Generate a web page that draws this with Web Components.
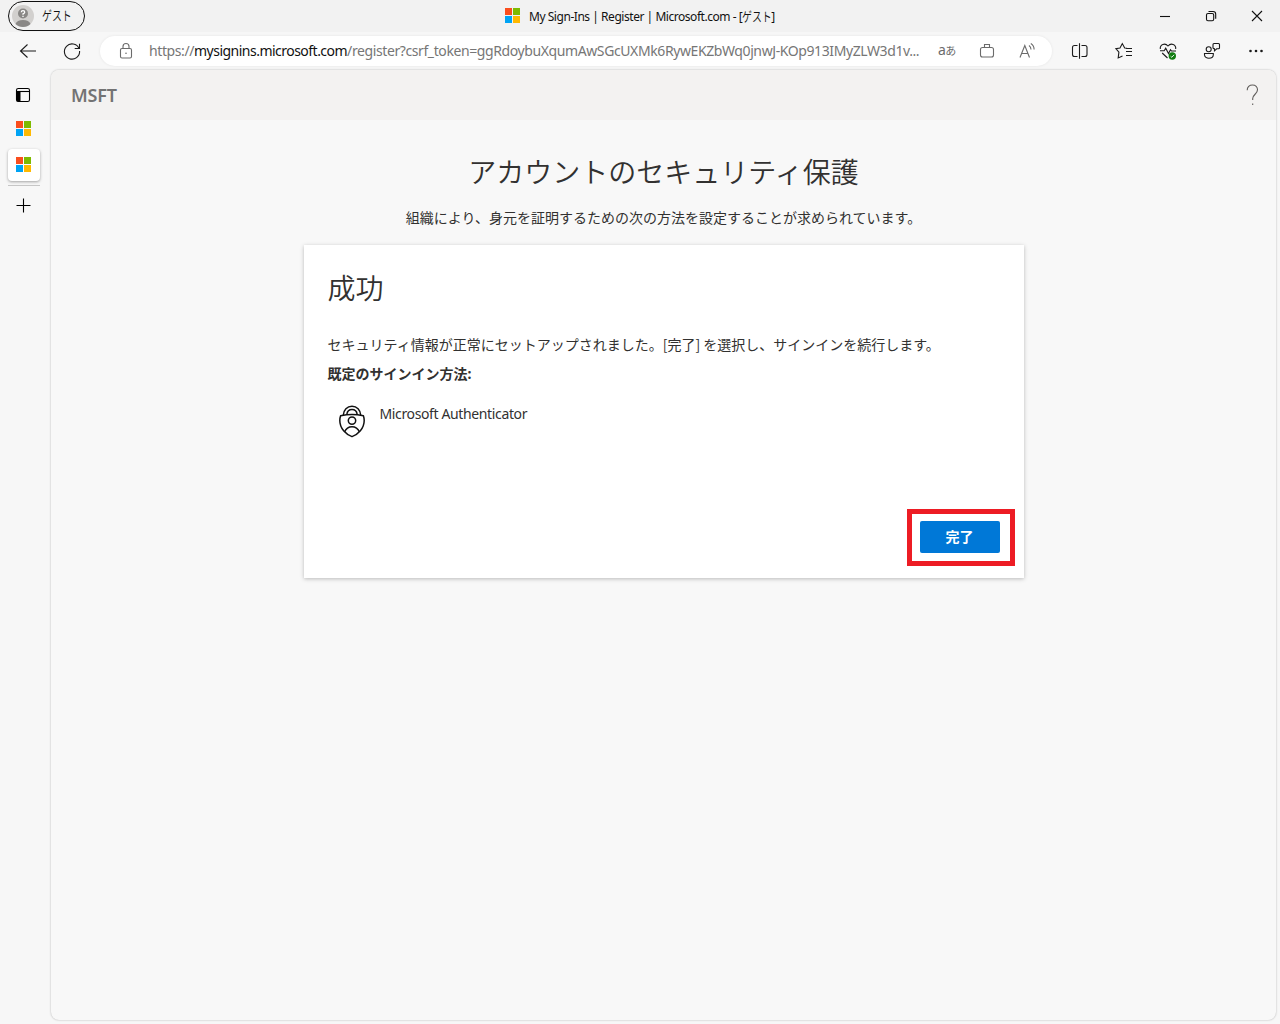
<!DOCTYPE html>
<html lang="ja">
<head>
<meta charset="UTF-8">
<title>My Sign-Ins | Register | Microsoft.com</title>
<style>
    body{
        margin: 0px;
        height: 100vh;
        overflow: hidden;
        background-color: #f7f7f7;
        font-family: "Noto Sans", "Noto Sans CJK JP", sans-serif;
        color: #323130;
    }
</style>
</head>
<body>
<browser-window>
    <title-bar slot="title">My Sign-Ins | Register | Microsoft.com</title-bar>
    <tool-bar slot="tools"></tool-bar>
    <side-tabs slot="tabs"></side-tabs>
    <page-header>MSFT</page-header>
    <page-intro>
        <span slot="title">アカウントのセキュリティ保護</span>
        組織により、身元を証明するための次の方法を設定することが求められています。
    </page-intro>
    <success-card>
        <span slot="title">成功</span>
        <span slot="message">セキュリティ情報が正常にセットアップされました。[完了] を選択し、サインインを続行します。</span>
        <span slot="label">既定のサインイン方法:</span>
        <auth-method>Microsoft Authenticator</auth-method>
        <done-button slot="action">完了</done-button>
    </success-card>
</browser-window>
<script>
const icons = {
    back: `<path d="M18 10H2.5M9.5 3.5L2.5 10L9.5 16.5"/>`,
    reload: `<path d="M17 7.5A7.6 7.6 0 1 0 17.6 10M17.5 2.7V7.5H12.7"/>`,
    lock: `<rect x="4.5" y="7.5" width="11" height="9.5" rx="1.5"/><path d="M7 7.5V5.5a3 3 0 0 1 6 0v2"/><circle cx="10" cy="12.2" r=".8" fill="currentColor" stroke="none"/>`,
    bag: `<rect x="3.5" y="6.5" width="13" height="9.5" rx="2"/><path d="M7.5 6.5v-3h5v3"/>`,
    read: `<path d="M3 16.5L7.8 4.5L12.5 16.5M4.7 12.5H11M12 4.5q2 1.4 2 4M13.8 2.5q3.3 2 3.3 6"/>`,
    split: `<path d="M7.5 4.5H4.5a2 2 0 0 0-2 2v7a2 2 0 0 0 2 2H7.5M11.5 4.5h3.5a2 2 0 0 1 2 2v7a2 2 0 0 1-2 2H11.5M9.5 2.3v15.4"/>`,
    star: `<path d="M13 7.3L10.7 7L8.3 2.6L6 7L1.9 7.6L4.9 11.1L4.2 16.9L8.5 14.9M12 7.5h6M12 10.5h6M12 14.5h6"/>`,
    health: `<path d="M2.3 8C1.8 3.5 7 1.5 10 5C13 1.5 18.2 3.5 17.7 8M2 9.7h4.2l1.5-2.5l2.8 5.3l2-3.8l1 1.3H18M4.2 12l5.3 5"/><circle cx="14.3" cy="15" r="3.7" fill="#107c10" stroke="none"/><path stroke="#fff" stroke-width=".9" d="M12.6 15.2l1.2 1.1l2.3-2.5"/>`,
    people: `<circle cx="6.7" cy="8.3" r="2.5"/><path d="M2.5 12.5h8.8v1.2c0 4.7-8.8 4.7-8.8 0zM11 3.5q0-1 1-1h4.5q1 0 1 1v3.3q0 1-1 1h-1.8l-2.2 2v-2q-1.5 0-1.5-1z"/>`,
    more: `<g fill="currentColor" stroke="none"><circle cx="4.5" cy="10" r="1.3"/><circle cx="10" cy="10" r="1.3"/><circle cx="15.5" cy="10" r="1.3"/></g>`,
    minimize: `<path d="M5 10.5h10"/>`,
    restore: `<rect x="5.5" y="7.5" width="7.2" height="7.2" rx="1.5"/><path d="M7.5 5.5h4.5q2.7 0 2.7 2.7v4.5"/>`,
    close: `<path d="M5 5L15 15M15 5L5 15"/>`,
    tabs: `<rect x="3.5" y="3.5" width="13" height="13" rx="1.8"/><path d="M3.5 6.5h13"/><path fill="currentColor" stroke="none" d="M3.5 6.5h4v10H5q-1.5 0-1.5-1.5z"/>`,
    plus: `<path d="M10.5 3.5v14M3.5 10.5h14"/>`,
    logo: `<g stroke="none"><path fill="#fa4e1e" d="M2 2h7v7H2z"/><path fill="#7eba00" d="M10 2h7v7h-7z"/><path fill="#00a3f4" d="M2 10h7v7H2z"/><path fill="#ffb901" d="M10 10h7v7h-7z"/></g>`
}

class UiIcon extends HTMLElement{
    constructor(){
        super();
        this._shadowRoot = this.attachShadow({mode: "open"})
    }
    connectedCallback(){
        this._shadowRoot.innerHTML = /*html*/`
            <style>
                :host{
                    display: block;
                    flex: none;
                    width: 20px;
                    height: 20px;
                }
                svg{
                    display: block;
                }
            </style>
            <svg width="20" height="20" viewBox="0 0 20 20" fill="none" stroke="currentColor" stroke-width="1.1">${icons[this.getAttribute("name")]}</svg>
        `
    }
}
customElements.define("ui-icon", UiIcon)

class BrowserWindow extends HTMLElement{
    constructor(){
        super();
        this.attachShadow({mode: "open"}).innerHTML = /*html*/`
            <style>
                :host{
                    display: grid;
                    height: 100vh;
                    grid-template-columns: 51px 1fr;
                    grid-template-rows: 32px 38px 1fr;
                }
                slot[name="title"], slot[name="tools"]{
                    display: block;
                    grid-column: 1 / 3;
                }
                .page{
                    margin: 0px 4px 4px 0px;
                    border-radius: 8px;
                    overflow: hidden;
                    background-color: #f8f8f8;
                    box-shadow: 0px 0px 2px rgba(0, 0, 0, 0.3);
                }
            </style>
            <slot name="title"></slot>
            <slot name="tools"></slot>
            <slot name="tabs"></slot>
            <div class="page"><slot></slot></div>
        `
    }
}
customElements.define("browser-window", BrowserWindow)

class TitleBar extends HTMLElement{
    constructor(){
        super();
        this.attachShadow({mode: "open"}).innerHTML = /*html*/`
            <style>
                :host{
                    display: grid;
                    grid-template-columns: 1fr auto 1fr;
                    height: 32px;
                    background-color: #f2f2f2;
                    color: #111;
                    font-size: 12px;
                }
                .profile{
                    box-sizing: border-box;
                    display: flex;
                    align-items: center;
                    width: 77px;
                    height: 30px;
                    margin: 1px 0px 0px 8px;
                    padding-left: 3px;
                    border: 1px solid #111;
                    border-radius: 15px;
                }
                .profile .kana{
                    margin: -3px 0px 0px 8px;
                }
                .kana{
                    display: inline-block;
                    width: 29px;
                    margin-top: -2px;
                    font-family: "Noto Sans CJK JP", sans-serif;
                    font-size: 13px;
                    font-weight: 350;
                    letter-spacing: 0px;
                    transform: scaleX(0.76);
                    transform-origin: left;
                    white-space: nowrap;
                }
                .title{
                    display: flex;
                    align-items: center;
                    gap: 6px;
                    height: 32px;
                    white-space: nowrap;
                }
                .text{
                    display: flex;
                    align-items: center;
                    width: 248px;
                    letter-spacing: -0.46px;
                    white-space: pre;
                }
                .controls{
                    display: flex;
                    justify-content: flex-end;
                    align-items: center;
                    gap: 26px;
                    padding-right: 13px;
                }
            </style>
            <div class="profile">
                <svg width="22" height="22" viewBox="0 0 22 22">
                    <circle cx="11" cy="11" r="11" fill="#d2d0ce"/>
                    <path d="M3.5 19q1.5-4 7.5-4t7.5 4q-3 3-7.5 3t-7.5-3z" fill="#8a8886"/>
                    <circle cx="11" cy="8.5" r="5" fill="#8a8886"/>
                    <path d="M9.3 7.3q0-1.6 1.7-1.6t1.7 1.5q0 1-1.7 1.7v.8M11 10.7v1.2" fill="none" stroke="#fff" stroke-width="1.3"/>
                </svg>
                <span class="kana">ゲスト</span>
            </div>
            <div class="title">
                <ui-icon name="logo"></ui-icon>
                <div class="text"><slot></slot> - [<span class="kana">ゲスト</span>]</div>
            </div>
            <div class="controls">
                <ui-icon name="minimize"></ui-icon>
                <ui-icon name="restore"></ui-icon>
                <ui-icon name="close"></ui-icon>
            </div>
        `
    }
}
customElements.define("title-bar", TitleBar)

class ToolBar extends HTMLElement{
    constructor(){
        super();
        this.attachShadow({mode: "open"}).innerHTML = /*html*/`
            <style>
                :host{
                    display: flex;
                    align-items: center;
                    height: 38px;
                    padding-left: 18px;
                    color: #1b1b1b;
                }
                .reload{
                    margin: 0px 18px 0px 24px;
                }
                .address{
                    box-sizing: border-box;
                    display: flex;
                    align-items: center;
                    width: 952px;
                    height: 30px;
                    padding-left: 16px;
                    border-radius: 15px;
                    background-color: #fff;
                    box-shadow: 0px 0px 3px rgba(0, 0, 0, 0.08);
                    color: #6b6b6b;
                }
                .url{
                    flex: none;
                    width: 774px;
                    margin: -1px 15px 0px 13px;
                    font-size: 14px;
                    letter-spacing: -0.4px;
                    white-space: nowrap;
                    color: #767676;
                }
                b{
                    font-weight: 400;
                    letter-spacing: -0.52px;
                    color: #111;
                }
                .lang{
                    width: 18px;
                    margin: -3px 21px 0px 0px;
                    font-size: 14px;
                    white-space: nowrap;
                    letter-spacing: -0.5px;
                }
                .lang small{
                    font-size: 11px;
                }
                .read{
                    margin-left: 20px;
                }
                .actions{
                    display: flex;
                    gap: 24px;
                    margin-left: 18px;
                }
            </style>
            <ui-icon name="back"></ui-icon>
            <ui-icon class="reload" name="reload"></ui-icon>
            <div class="address">
                <ui-icon name="lock"></ui-icon>
                <div class="url">https://<b>mysignins.microsoft.com</b>/register?csrf_token=ggRdoybuXqumAwSGcUXMk6RywEKZbWq0jnwJ-KOp913IMyZLW3d1v...</div>
                <div class="lang">a<small>あ</small></div>
                <ui-icon name="bag"></ui-icon>
                <ui-icon class="read" name="read"></ui-icon>
            </div>
            <div class="actions">
                <ui-icon name="split"></ui-icon>
                <ui-icon name="star"></ui-icon>
                <ui-icon name="health"></ui-icon>
                <ui-icon name="people"></ui-icon>
                <ui-icon name="more"></ui-icon>
            </div>
        `
    }
}
customElements.define("tool-bar", ToolBar)

class SideTabs extends HTMLElement{
    constructor(){
        super();
        this.attachShadow({mode: "open"}).innerHTML = /*html*/`
            <style>
                :host{
                    display: flex;
                    flex-direction: column;
                    box-sizing: border-box;
                    padding: 15px 11px 0px 8px;
                    color: #000;
                }
                .item{
                    margin-left: 5px;
                }
                .logo{
                    margin: 14px 0px 10px 6px;
                }
                .active{
                    box-sizing: border-box;
                    width: 32px;
                    height: 32px;
                    padding: 6px;
                    border-radius: 4px;
                    background-color: #fff;
                    box-shadow: 0px 1px 3px rgba(0, 0, 0, 0.35);
                }
                .line{
                    width: 32px;
                    height: 1px;
                    margin: 4px 0px 9px;
                    background-color: #c6c6c6;
                }
            </style>
            <ui-icon class="item" name="tabs"></ui-icon>
            <ui-icon class="logo" name="logo"></ui-icon>
            <div class="active"><ui-icon name="logo"></ui-icon></div>
            <div class="line"></div>
            <ui-icon class="item" name="plus"></ui-icon>
        `
    }
}
customElements.define("side-tabs", SideTabs)

class PageHeader extends HTMLElement{
    constructor(){
        super();
        this.attachShadow({mode: "open"}).innerHTML = /*html*/`
            <style>
                :host{
                    display: flex;
                    align-items: center;
                    justify-content: space-between;
                    height: 50px;
                    padding: 0px 17px 0px 20px;
                    background-color: #f3f2f1;
                    color: #737373;
                    font-size: 18px;
                    font-weight: 600;
                    letter-spacing: -0.2px;
                }
            </style>
            <slot></slot>
            <svg width="13" height="22" viewBox="0 0 13 22" fill="none" stroke="#605e5c" stroke-width="1.1">
                <path d="M1.2 6.2C1.2 2.8 3.4 1 6.5 1s5 1.9 5 4.8c0 4.2-4.8 4.7-4.8 8.8v1.5M6.7 19.5v1.4"/>
            </svg>
        `
    }
}
customElements.define("page-header", PageHeader)

class PageIntro extends HTMLElement{
    constructor(){
        super();
        this.attachShadow({mode: "open"}).innerHTML = /*html*/`
            <style>
                :host{
                    display: block;
                    height: 125px;
                    text-align: center;
                    font-family: "Noto Sans CJK JP", sans-serif;
                }
                h1{
                    margin: 0px;
                    padding-top: 31px;
                    font-size: 28px;
                    font-weight: 350;
                    line-height: 40px;
                }
                p{
                    margin: 16px 0px 0px;
                    font-size: 14px;
                    line-height: 20px;
                }
            </style>
            <h1><slot name="title"></slot></h1>
            <p><slot></slot></p>
        `
    }
}
customElements.define("page-intro", PageIntro)

class SuccessCard extends HTMLElement{
    constructor(){
        super();
        this.attachShadow({mode: "open"}).innerHTML = /*html*/`
            <style>
                :host{
                    box-sizing: border-box;
                    display: flex;
                    flex-direction: column;
                    width: 720px;
                    height: 333px;
                    margin: 0px auto;
                    padding: 22px 24px 24px;
                    background-color: #fff;
                    box-shadow: 0px 1px 4px rgba(0, 0, 0, 0.25);
                    font-size: 14px;
                    line-height: 20px;
                }
                h2{
                    margin: 0px;
                    font-family: "Noto Sans CJK JP", sans-serif;
                    font-size: 28px;
                    font-weight: 350;
                    line-height: 40px;
                }
                .message{
                    margin-top: 27px;
                    white-space: nowrap;
                    font-family: "Noto Sans CJK JP", sans-serif;
                }
                .label{
                    margin: 10px 0px 20px;
                    font-weight: 700;
                }
                .action{
                    display: flex;
                    justify-content: flex-end;
                    margin: auto -15px -12px 0px;
                }
            </style>
            <h2><slot name="title"></slot></h2>
            <div class="message"><slot name="message"></slot></div>
            <div class="label"><slot name="label"></slot></div>
            <slot></slot>
            <div class="action"><slot name="action"></slot></div>
        `
    }
}
customElements.define("success-card", SuccessCard)

class AuthMethod extends HTMLElement{
    constructor(){
        super();
        this.attachShadow({mode: "open"}).innerHTML = /*html*/`
            <style>
                :host{
                    display: flex;
                    gap: 14px;
                    padding-left: 11px;
                    letter-spacing: -0.37px;
                    white-space: nowrap;
                }
                svg{
                    margin-top: 1px;
                }
            </style>
            <svg width="27" height="33" viewBox="0 0 27 33" fill="none" stroke="#111" stroke-width="1.5">
                <path d="M1.6 10.8Q7.5 9.4 13 9.4T24.4 10.8Q25.2 13 25.2 15.5C25.2 23.5 19 29.5 13 31.6C7 29.5 .8 23.5 .8 15.5Q.8 13 1.6 10.8z"/>
                <path d="M4.3 10C4.7 5 8 1.2 13 1.2S21.3 5 21.7 10M7.8 9.5C8.2 6.6 10 4.6 13 4.6S17.8 6.6 18.2 9.5"/>
                <circle cx="13" cy="15.6" r="3.7"/>
                <path d="M5.5 27C7 23.6 9.6 21.8 13 21.8S19 23.6 20.5 27"/>
            </svg>
            <span><slot></slot></span>
        `
    }
}
customElements.define("auth-method", AuthMethod)

class DoneButton extends HTMLElement{
    constructor(){
        super();
        this.attachShadow({mode: "open"}).innerHTML = /*html*/`
            <style>
                :host{
                    box-sizing: border-box;
                    display: block;
                    width: 108px;
                    height: 57px;
                    padding: 7px 8px;
                    border: 5px solid #ed1c24;
                }
                button{
                    display: block;
                    width: 80px;
                    height: 32px;
                    padding: 0px 0px 2px;
                    border: none;
                    border-radius: 2px;
                    background-color: #0078d7;
                    color: #fff;
                    font-family: "Noto Sans CJK JP", sans-serif;
                    font-size: 14px;
                    font-weight: 700;
                }
            </style>
            <button><slot></slot></button>
        `
    }
}
customElements.define("done-button", DoneButton)
</script>
</body>
</html>
